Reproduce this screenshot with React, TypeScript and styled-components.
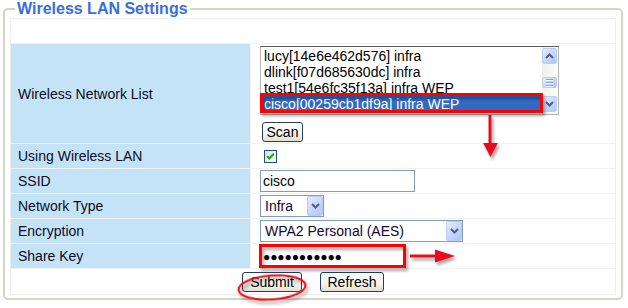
import React from 'react';
import styled, { createGlobalStyle } from 'styled-components';

const Global = createGlobalStyle`
  html, body { margin: 0; padding: 0; background: #fff; }
  body {
    width: 628px; height: 308px; overflow: hidden;
    font-family: "Liberation Sans", Arial, sans-serif;
  }
`;

const Page = styled.div`
  position: relative;
  width: 628px;
  height: 308px;
`;

const Fieldset = styled.fieldset`
  margin: 0 0 0 3px;
  width: 620px;
  box-sizing: border-box;
  border: 2px solid #d6d4c6;
  border-radius: 5px;
  padding: 0 5px 3px 5px;
  min-width: 0;
`;

const Legend = styled.legend`
  margin-left: 5px;
  padding: 0 2px;
  font: bold 16px/18px "Liberation Sans", Arial, sans-serif;
  color: #3a6ddf;
`;

const FormTable = styled.div`
  display: grid;
  grid-template-columns: 239px 1fr;
  grid-template-rows: 24px 99px 24px 24px 24px 24px 24px 25px;
  gap: 1px;
  border: 1px solid #efefef;
  background: #f1f1f1;
`;

const FullCell = styled.div<{ $center?: boolean }>`
  grid-column: 1 / 3;
  background: #fff;
  display: flex;
  justify-content: ${(p) => (p.$center ? 'center' : 'flex-start')};
  align-items: flex-start;
  gap: 18px;
  padding-top: ${(p) => (p.$center ? '3px' : '0')};
`;

const Label = styled.div`
  background: #c5e3f7;
  display: flex;
  align-items: center;
  padding-left: 7px;
  font-size: 14px;
  color: #0c0c1e;
`;

const Value = styled.div<{ $stack?: boolean }>`
  background: #fff;
  display: flex;
  flex-direction: ${(p) => (p.$stack ? 'column' : 'row')};
  align-items: ${(p) => (p.$stack ? 'flex-start' : 'center')};
  padding: ${(p) => (p.$stack ? '2px 0 0 9px' : '0 0 0 9px')};
`;

const ListBox = styled.div`
  width: 299px;
  height: 69px;
  box-sizing: border-box;
  border: 1px solid #b3b3b3;
  border-top-color: #5e5e5e;
  background: #fff;
  display: flex;
`;

const Items = styled.div`
  flex: 1;
  display: flex;
  flex-direction: column;
  padding: 1px 1px 0 1px;
`;

const Item = styled.div<{ $selected?: boolean }>`
  height: 16px;
  line-height: 16px;
  font-size: 14px;
  padding-left: 2px;
  white-space: nowrap;
  color: ${(p) => (p.$selected ? '#fff' : '#000')};
  background: ${(p) => (p.$selected ? '#316ac5' : 'transparent')};
`;

const ScrollTrack = styled.div`
  width: 16px;
  display: flex;
  flex-direction: column;
  align-items: flex-start;
  padding: 1px 0 2px 0;
  background: linear-gradient(90deg, #f0efe8, #fdfdfa);
`;

const ScrollBtn = styled.div<{ $push?: boolean; $h?: number }>`
  width: 15px;
  height: ${(p) => p.$h ?? 16}px;
  box-sizing: border-box;
  border: 1px solid #bccdf4;
  border-radius: 2px;
  background: linear-gradient(135deg, #e4ecfe 0%, #c6d6fb 55%, #b2c6f5 100%);
  display: flex;
  flex-direction: column;
  align-items: center;
  justify-content: center;
  gap: 1px;
  margin-top: ${(p) => (p.$push ? 'auto' : '0')};
`;

const Thumb = styled(ScrollBtn)`
  margin-top: 13px;
`;

const Grip = styled.div`
  width: 7px;
  height: 1px;
  background: #8aa3dc;
  border-bottom: 1px solid #eef3ff;
`;

const XPButton = styled.button<{ $w: number }>`
  width: ${(p) => p.$w}px;
  height: 20px;
  box-sizing: border-box;
  padding: 0;
  border: 1px solid #243e64;
  border-radius: 3px;
  background: linear-gradient(180deg, #ffffff 0%, #f6f5ef 55%, #e4e1d5 100%);
  font: 14px/18px "Liberation Sans", Arial, sans-serif;
  color: #000;
`;

const ScanButton = styled(XPButton)`
  margin: 7px 0 0 2px;
`;

const CheckBox = styled.div`
  width: 13px;
  height: 13px;
  box-sizing: border-box;
  margin-left: 4px;
  border: 1px solid #1c5180;
  background: linear-gradient(135deg, #dcdcd6 0%, #f6f6f3 70%, #fff 100%);
  display: flex;
  align-items: center;
  justify-content: center;
`;

const TextInput = styled.div<{ $w: number }>`
  width: ${(p) => p.$w}px;
  height: 22px;
  box-sizing: border-box;
  border: 1px solid #7f9db9;
  background: #fff;
  padding-left: 2px;
  font-size: 14px;
  line-height: 20px;
  color: #000;
`;

const Dots = styled.span`
  font: 12.2px/20px "Liberation Sans", "DejaVu Sans", sans-serif;
  letter-spacing: -0.2px;
  color: #000;
`;

const Select = styled.div<{ $w: number }>`
  width: ${(p) => p.$w}px;
  height: 22px;
  box-sizing: border-box;
  border: 1px solid #7f9db9;
  background: #fff;
  display: flex;
  align-items: stretch;
`;

const SelectText = styled.div`
  flex: 1;
  padding-left: 4px;
  font-size: 14px;
  line-height: 20px;
  color: #120634;
  white-space: nowrap;
`;

const DropBtn = styled.div`
  width: 16px;
  box-sizing: border-box;
  border: 1px solid #bccdf4;
  border-radius: 2px;
  background: linear-gradient(135deg, #e4ecfe 0%, #c6d6fb 55%, #b2c6f5 100%);
  display: flex;
  align-items: center;
  justify-content: center;
`;

const Overlay = styled.svg`
  position: absolute;
  left: 0;
  top: 0;
  pointer-events: none;
`;

const Chevron = ({ up }: { up?: boolean }) => (
  <svg width="9" height="6" viewBox="0 0 9 6">
    <path
      d={up ? 'M1 5 L4.5 1.5 L8 5' : 'M1 1 L4.5 4.5 L8 1'}
      fill="none"
      stroke="#4d6185"
      strokeWidth="2"
    />
  </svg>
);

const networks = [
  'lucy[14e6e462d576] infra',
  'dlink[f07d685630dc] infra',
  'test1[54e6fc35f13a] infra WEP',
  'cisco[00259cb1df9a] infra WEP',
];

export default function App() {
  return (
    <Page>
      <Global />
      <Fieldset>
        <Legend>Wireless LAN Settings</Legend>
        <FormTable>
          <FullCell />

          <Label>Wireless Network List</Label>
          <Value $stack>
            <ListBox>
              <Items>
                {networks.map((n, i) => (
                  <Item key={n} $selected={i === 3}>
                    {n}
                  </Item>
                ))}
              </Items>
              <ScrollTrack>
                <ScrollBtn>
                  <Chevron up />
                </ScrollBtn>
                <Thumb $h={11}>
                  <Grip />
                  <Grip />
                  <Grip />
                </Thumb>
                <ScrollBtn $push>
                  <Chevron />
                </ScrollBtn>
              </ScrollTrack>
            </ListBox>
            <ScanButton $w={41}>Scan</ScanButton>
          </Value>

          <Label>Using Wireless LAN</Label>
          <Value>
            <CheckBox>
              <svg width="9" height="9" viewBox="0 0 9 9">
                <path d="M1.2 4.3 L3.3 6.5 L7.8 1.8" fill="none" stroke="#21a121" strokeWidth="2" />
              </svg>
            </CheckBox>
          </Value>

          <Label>SSID</Label>
          <Value>
            <TextInput $w={155}>cisco</TextInput>
          </Value>

          <Label>Network Type</Label>
          <Value>
            <Select $w={64}>
              <SelectText>Infra</SelectText>
              <DropBtn>
                <Chevron />
              </DropBtn>
            </Select>
          </Value>

          <Label>Encryption</Label>
          <Value>
            <Select $w={203}>
              <SelectText>WPA2 Personal (AES)</SelectText>
              <DropBtn>
                <Chevron />
              </DropBtn>
            </Select>
          </Value>

          <Label>Share Key</Label>
          <Value>
            <TextInput $w={145}>
              <Dots>●●●●●●●●●●●</Dots>
            </TextInput>
          </Value>

          <FullCell $center>
            <XPButton $w={60}>Submit</XPButton>
            <XPButton $w={64}>Refresh</XPButton>
          </FullCell>
        </FormTable>
      </Fieldset>

      <Overlay width="628" height="308" viewBox="0 0 628 308">
        <defs>
          <filter id="sh" x="-20%" y="-50%" width="140%" height="200%">
            <feDropShadow dx="2" dy="3" stdDeviation="1.6" floodColor="#000" floodOpacity="0.35" />
          </filter>
        </defs>
        <g filter="url(#sh)">
          <rect x="261.5" y="94.5" width="280" height="17" fill="none" stroke="#f00" strokeWidth="3" />
          <rect x="260.5" y="245.5" width="144" height="21" fill="none" stroke="#f00" strokeWidth="3" />
          <path d="M490 115 V144" stroke="#e8101a" strokeWidth="3" />
          <path d="M483 143 L498 143 L490.5 157 Z" fill="#e8101a" />
          <path d="M410 256 H437" stroke="#e8101a" strokeWidth="3" />
          <path d="M435 249.5 L455 256 L435 262.5 Z" fill="#e8101a" />
          <ellipse
            cx="272"
            cy="287.5"
            rx="33.5"
            ry="12"
            transform="rotate(-4 272 287.5)"
            fill="none"
            stroke="#e8101a"
            strokeWidth="2"
          />
        </g>
      </Overlay>
    </Page>
  );
}
